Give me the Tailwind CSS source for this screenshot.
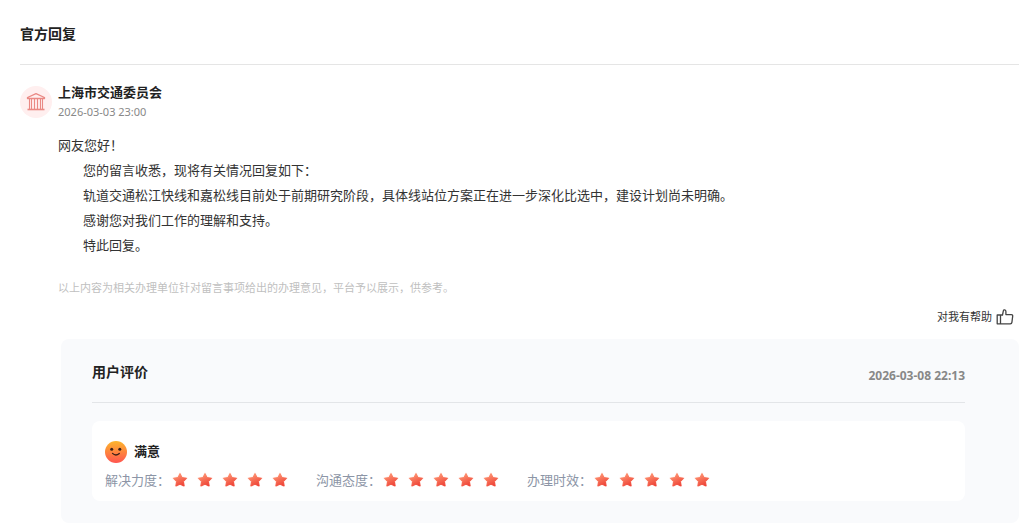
<!DOCTYPE html>
<html lang="zh-CN">
<head>
  <meta charset="UTF-8" />
  <meta name="viewport" content="width=device-width, initial-scale=1.0"/>
  <title>官方回复</title>
  <script src="https://cdn.jsdelivr.net/npm/@tailwindcss/browser@4"></script>
</head>
<body class="bg-white pl-5 pr-[9px] pt-6 pb-1.5 font-['Noto_Sans','Noto_Sans_CJK_SC',sans-serif] text-[13px] text-[#333333]">

  <!-- shared icons -->
  <svg width="0" height="0" class="absolute" aria-hidden="true">
    <defs>
      <linearGradient id="starFill" x1="0.2" y1="0" x2="0.7" y2="1">
        <stop offset="0" stop-color="#ff9a76"/>
        <stop offset="1" stop-color="#ee4034"/>
      </linearGradient>
      <symbol id="star" viewBox="0 0 16 16">
        <path d="M8 1.6 10 5.6 14.5 6.3 11.4 9.5 12.1 14 8 12.2 3.9 14 4.6 9.5 1.5 6.3 6 5.6Z" fill="#ffd9d0" stroke="#ffd9d0" stroke-width="2" stroke-linejoin="round" opacity=".7"/>
        <path d="M8 1.6 10 5.6 14.5 6.3 11.4 9.5 12.1 14 8 12.2 3.9 14 4.6 9.5 1.5 6.3 6 5.6Z" fill="url(#starFill)" stroke="url(#starFill)" stroke-width="1" stroke-linejoin="round"/>
      </symbol>
    </defs>
  </svg>

  <h1 class="border-b border-[#e5e5e5] pb-5 text-sm font-bold leading-5 text-[#222222]">官方回复</h1>

  <!-- reply -->
  <div class="flex gap-1.5 pt-[21px]">
    <div class="flex h-8 w-8 shrink-0 items-center justify-center rounded-full bg-[#ffefef]">
      <svg class="h-5 w-5" viewBox="0 0 20 20" fill="none" stroke="#ea8984">
        <path d="M1.5 5.5 10 1.6l8.5 3.9v1h-17z" stroke-width="1.3" stroke-linejoin="round"/>
        <path d="M3.5 7v10M5.5 7v10M8.5 7v10M11.5 7v10M14.5 7v10M16.5 7v10" stroke-width="1.1"/>
        <path d="M1.5 17.5h17" stroke-width="1.6"/>
      </svg>
    </div>
    <div class="min-w-0 flex-1">
      <h2 class="-mt-1 font-bold leading-5 text-[#222222]">上海市交通委员会</h2>
      <time class="block text-[11px] leading-5 text-[#888888]">2026-03-03 23:00</time>

      <div class="mt-[11px] leading-[25px]">
        <p>网友您好！</p>
        <p class="indent-[25px]">您的留言收悉，现将有关情况回复如下：</p>
        <p class="indent-[25px]">轨道交通松江快线和嘉松线目前处于前期研究阶段，具体线站位方案正在进一步深化比选中，建设计划尚未明确。</p>
        <p class="indent-[25px]">感谢您对我们工作的理解和支持。</p>
        <p class="indent-[25px]">特此回复。</p>
      </div>

      <p class="mt-5 text-[11px] leading-5 text-[#bfbfbf]">以上内容为相关办理单位针对留言事项给出的办理意见，平台予以展示，供参考。</p>

      <div class="mt-[9px] flex justify-end pr-[5px]">
        <button type="button" class="flex items-center gap-1 text-[11px] leading-5">
          对我有帮助
          <svg class="h-[18px] w-[18px]" viewBox="0 0 18 18" fill="none" stroke="#444444" stroke-width="1.3" stroke-linejoin="round">
            <path d="M1.2 7h3.3v8.8H1.2zM4.5 7h2L7.4 2.6C7.6 1.6 9.9 1.4 9.9 3.4V6.6H15.3c1 0 1.5.6 1.4 1.5l-.8 6.3c-.1.9-.7 1.4-1.6 1.4H4.5"/>
          </svg>
        </button>
      </div>
    </div>
  </div>

  <!-- rating -->
  <section class="ml-[41px] mt-3 rounded-lg bg-[#f9fafc] pb-[22px] pl-[31px] pr-[54px] pt-[23px]">
    <div class="flex items-start justify-between border-b border-[#e3e5e8] pb-5">
      <h2 class="text-sm font-bold leading-5 text-[#222222]">用户评价</h2>
      <time class="mt-2 text-xs font-bold leading-3 text-[#888888]">2026-03-08 22:13</time>
    </div>

    <div class="mt-[18px] rounded-lg bg-white px-[13px] pb-[11px] pt-5">
      <div class="flex gap-[7px]">
        <svg class="h-[22px] w-[22px]" viewBox="0 0 22 22">
          <defs>
            <linearGradient id="faceFill" x1="0" y1="0" x2="0" y2="1">
              <stop offset="0" stop-color="#fcb52c"/>
              <stop offset="1" stop-color="#ff5550"/>
            </linearGradient>
          </defs>
          <circle cx="11" cy="11" r="11" fill="url(#faceFill)"/>
          <circle cx="6.7" cy="8.3" r="1.5" fill="#3a2018"/>
          <circle cx="14.8" cy="8.3" r="1.5" fill="#3a2018"/>
          <path d="M7.5 12.4q3.3 3.2 6.8 0" fill="none" stroke="#3a2018" stroke-width="1.3" stroke-linecap="round"/>
        </svg>
        <strong class="leading-5 text-[#222222]">满意</strong>
      </div>

      <div class="mt-[7px] flex flex-wrap gap-x-7 leading-5 text-[#8c95a6]">
        <div class="flex items-center gap-0.5">
          <span>解决力度：</span>
          <div class="flex gap-[9px]" role="img" aria-label="5 星">
            <svg class="h-4 w-4"><use href="#star"/></svg>
            <svg class="h-4 w-4"><use href="#star"/></svg>
            <svg class="h-4 w-4"><use href="#star"/></svg>
            <svg class="h-4 w-4"><use href="#star"/></svg>
            <svg class="h-4 w-4"><use href="#star"/></svg>
          </div>
        </div>
        <div class="flex items-center gap-0.5">
          <span>沟通态度：</span>
          <div class="flex gap-[9px]" role="img" aria-label="5 星">
            <svg class="h-4 w-4"><use href="#star"/></svg>
            <svg class="h-4 w-4"><use href="#star"/></svg>
            <svg class="h-4 w-4"><use href="#star"/></svg>
            <svg class="h-4 w-4"><use href="#star"/></svg>
            <svg class="h-4 w-4"><use href="#star"/></svg>
          </div>
        </div>
        <div class="flex items-center gap-0.5">
          <span>办理时效：</span>
          <div class="flex gap-[9px]" role="img" aria-label="5 星">
            <svg class="h-4 w-4"><use href="#star"/></svg>
            <svg class="h-4 w-4"><use href="#star"/></svg>
            <svg class="h-4 w-4"><use href="#star"/></svg>
            <svg class="h-4 w-4"><use href="#star"/></svg>
            <svg class="h-4 w-4"><use href="#star"/></svg>
          </div>
        </div>
      </div>
    </div>
  </section>

</body>
</html>
